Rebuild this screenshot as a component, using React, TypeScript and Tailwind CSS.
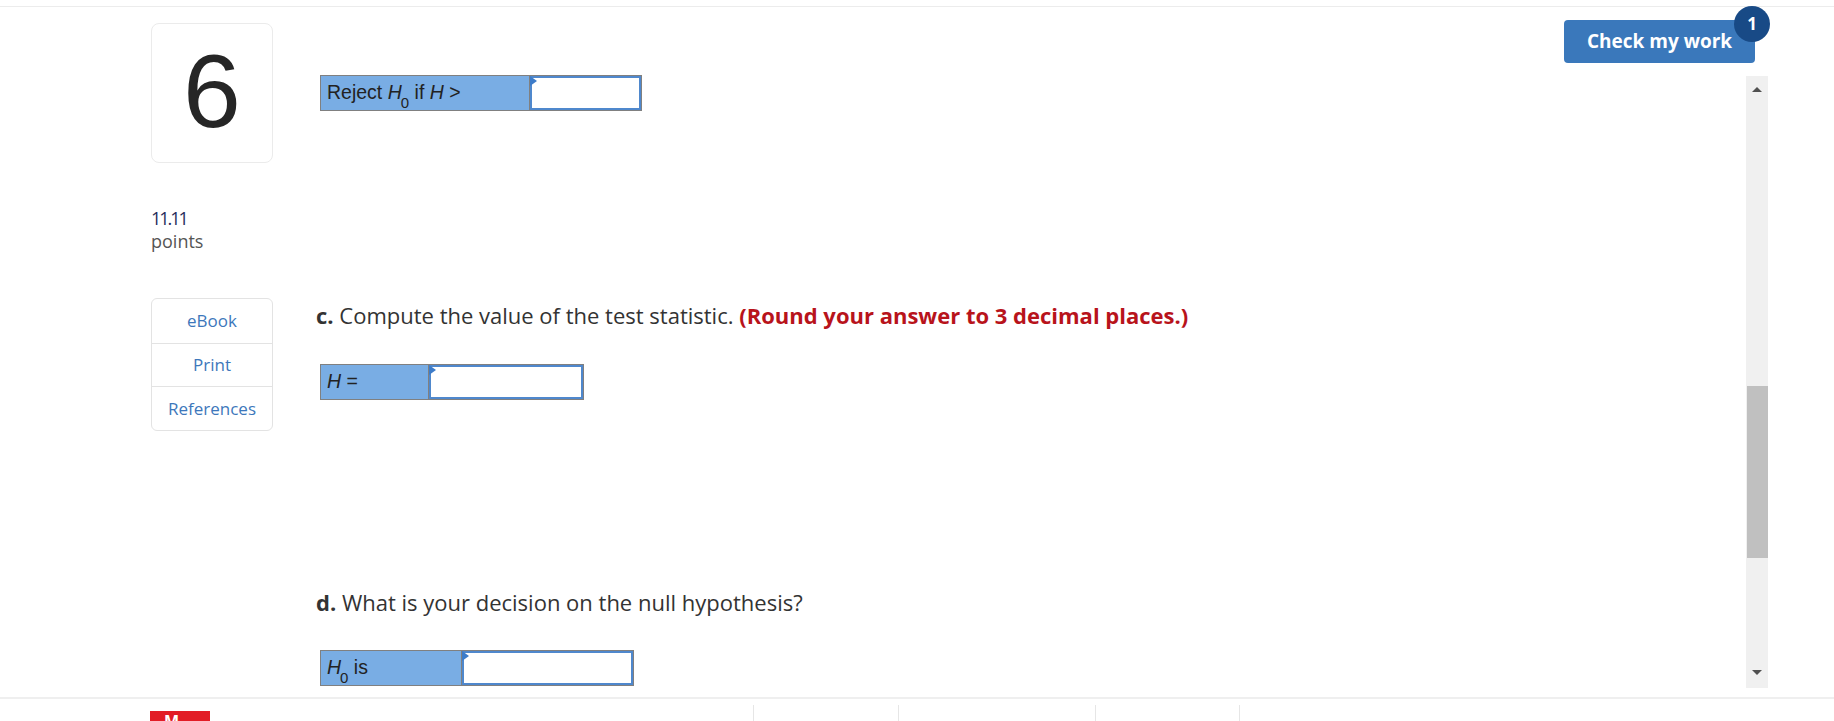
import React from 'react';

type AnswerRowProps = {
  label: React.ReactNode;
  labelWidth: string;
  inputWidth: string;
};

// blue label cell + empty answer box, as drawn by the assignment player
const AnswerRow: React.FC<AnswerRowProps> = ({ label, labelWidth, inputWidth }) => {
  return (
    <div className="flex h-[36px] border border-[#808080] ml-[4px] w-fit">
      <div
        className={`${labelWidth} bg-[#79ade4] pl-[6px] flex items-center text-[19.5px] text-[#222] font-['Liberation_Sans',Arial,sans-serif]`}
      >
        {label}
      </div>
      <div className={`${inputWidth} relative border-l border-[#808080] bg-white`}>
        <div className="h-full border-2 border-[#4f88cd] bg-white" />
        <div className="absolute left-0 top-0 w-0 h-0 border-t-[5px] border-b-[5px] border-l-[7px] border-t-transparent border-b-transparent border-l-[#3d7cc9]" />
      </div>
    </div>
  );
};

const H0 = () => (
  <span className="italic">
    H<sub className="not-italic text-[15px] align-[-5px] -ml-[1px]">0</sub>
  </span>
);

const App: React.FC = () => {
  return (
    <div className="w-full h-[721px] overflow-hidden bg-white font-['Open_Sans','Lato',sans-serif] text-[#333]">
      {/* top strip */}
      <div className="h-[7px] border-b border-[#ececec]" />

      <div className="flex h-[690px]">
        {/* left rail */}
        <div className="ml-[151px] w-[122px] flex-none">
          <div className="mt-[16px] h-[140px] rounded-lg border border-[#ebebeb] flex items-center justify-center">
            <span className="text-[104px] leading-none text-[#262626] font-['Liberation_Sans',sans-serif] -mt-[4px]">6</span>
          </div>
          <div className="mt-[44px] text-[18px] leading-[22px] text-[#1f2d5c] tracking-[-2px]">11.11</div>
          <div className="text-[18px] leading-[24px] text-[#555]">points</div>
          <div className="mt-[45px] rounded-md border border-[#e3e3e3] text-[17px] text-[#3d77bb]">
            <div className="h-[45px] flex items-center justify-center border-b border-[#e3e3e3]">eBook</div>
            <div className="h-[43px] flex items-center justify-center border-b border-[#e3e3e3]">Print</div>
            <div className="h-[43px] flex items-center justify-center">References</div>
          </div>
        </div>

        {/* question body */}
        <div className="ml-[43px] flex-1">
          <div className="mt-[68px]">
            <AnswerRow
              labelWidth="w-[208px]"
              inputWidth="w-[112px]"
              label={
                <span>
                  Reject <H0 /> if <span className="italic">H</span> &gt;
                </span>
              }
            />
          </div>

          <p className="mt-[192px] text-[22px] leading-[24px]">
            <span className="font-bold">c.</span> Compute the value of the test statistic.{' '}
            <span className="font-bold text-[#b8131b]">(Round your answer to 3 decimal places.)</span>
          </p>

          <div className="mt-[37px]">
            <AnswerRow
              labelWidth="w-[107px]"
              inputWidth="w-[155px]"
              label={<span><span className="italic">H</span> =</span>}
            />
          </div>

          <p className="mt-[190px] text-[22px] leading-[24px]">
            <span className="font-bold">d.</span> What is your decision on the null hypothesis?
          </p>

          <div className="mt-[36px]">
            <AnswerRow
              labelWidth="w-[140px]"
              inputWidth="w-[172px]"
              label={
                <span>
                  <H0 /> is
                </span>
              }
            />
          </div>
        </div>

        {/* right side: button + scrollbar */}
        <div className="w-[270px] flex-none flex flex-col">
          <div className="mt-[13px] relative w-[191px]">
            <button className="w-[191px] h-[43px] rounded-[4px] bg-[#3a78bb] text-white text-[19px] font-bold font-['Open_Sans',sans-serif]">
              Check my work
            </button>
            <span className="absolute -right-[15px] -top-[14px] w-[36px] h-[36px] rounded-full bg-[#184a86] text-white text-[17px] font-bold flex items-center justify-center">
              1
            </span>
          </div>
          <div className="mt-[13px] ml-[182px] w-[22px] h-[612px] bg-[#f0f0f0] flex flex-col items-center">
            <div className="mt-[11px] w-0 h-0 border-l-[5px] border-r-[5px] border-b-[5px] border-l-transparent border-r-transparent border-b-[#505050]" />
            <div className="mt-[294px] w-[21px] h-[172px] bg-[#c0c0c0]" />
            <div className="mt-[112px] w-0 h-0 border-l-[5px] border-r-[5px] border-t-[5px] border-l-transparent border-r-transparent border-t-[#505050]" />
          </div>
        </div>
      </div>

      {/* footer */}
      <div className="border-t-2 border-[#efefef] h-[24px] flex">
        <div className="ml-[150px] mt-[12px] w-[60px] h-[20px] bg-[#e21d26] text-white font-bold text-[16px] leading-[20px] pl-[14px]">
          M
        </div>
        <div className="ml-[543px] mt-[6px] w-px h-[20px] bg-[#e6e6e6]" />
        <div className="ml-[144px] mt-[6px] w-px h-[20px] bg-[#e6e6e6]" />
        <div className="ml-[196px] mt-[6px] w-px h-[20px] bg-[#e6e6e6]" />
        <div className="ml-[143px] mt-[6px] w-px h-[20px] bg-[#e6e6e6]" />
      </div>
    </div>
  );
};

export default App;
